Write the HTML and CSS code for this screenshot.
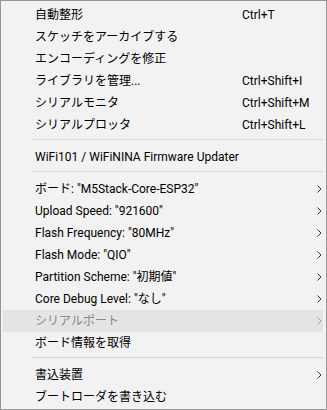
FILE: index.html
```html
<!DOCTYPE html>
<html lang="ja">
<head>
  <meta charset="UTF-8">
  <title>ツール</title>
  <link rel="stylesheet" href="styles.css">
</head>
<body>
  <div class="menu">
    <div class="item"><span class="label">自動整形</span><span class="key">Ctrl+T</span></div>
    <div class="item"><span class="label">スケッチをアーカイブする</span></div>
    <div class="item"><span class="label">エンコーディングを修正</span></div>
    <div class="item"><span class="label">ライブラリを管理...</span><span class="key">Ctrl+Shift+I</span></div>
    <div class="item"><span class="label">シリアルモニタ</span><span class="key">Ctrl+Shift+M</span></div>
    <div class="item"><span class="label">シリアルプロッタ</span><span class="key">Ctrl+Shift+L</span></div>
    <div class="sep"></div>
    <div class="item"><span class="label">WiFi101 / WiFiNINA Firmware Updater</span></div>
    <div class="sep"></div>
    <div class="item sub"><span class="label">ボード: "M5Stack-Core-ESP32"</span><span class="key"></span><svg class="arrow" width="5" height="8" viewBox="0 0 5 8"><path d="M0.5 0.5 L4 4 L0.5 7.5" fill="none" stroke="currentColor" stroke-width="1"/></svg></div>
    <div class="item sub"><span class="label">Upload Speed: "921600"</span><span class="key"></span><svg class="arrow" width="5" height="8" viewBox="0 0 5 8"><path d="M0.5 0.5 L4 4 L0.5 7.5" fill="none" stroke="currentColor" stroke-width="1"/></svg></div>
    <div class="item sub"><span class="label">Flash Frequency: "80MHz"</span><span class="key"></span><svg class="arrow" width="5" height="8" viewBox="0 0 5 8"><path d="M0.5 0.5 L4 4 L0.5 7.5" fill="none" stroke="currentColor" stroke-width="1"/></svg></div>
    <div class="item sub"><span class="label">Flash Mode: "QIO"</span><span class="key"></span><svg class="arrow" width="5" height="8" viewBox="0 0 5 8"><path d="M0.5 0.5 L4 4 L0.5 7.5" fill="none" stroke="currentColor" stroke-width="1"/></svg></div>
    <div class="item sub"><span class="label">Partition Scheme: "初期値"</span><span class="key"></span><svg class="arrow" width="5" height="8" viewBox="0 0 5 8"><path d="M0.5 0.5 L4 4 L0.5 7.5" fill="none" stroke="currentColor" stroke-width="1"/></svg></div>
    <div class="item sub"><span class="label">Core Debug Level: "なし"</span><span class="key"></span><svg class="arrow" width="5" height="8" viewBox="0 0 5 8"><path d="M0.5 0.5 L4 4 L0.5 7.5" fill="none" stroke="currentColor" stroke-width="1"/></svg></div>
    <div class="item sub disabled hover"><span class="label">シリアルポート</span><span class="key"></span><svg class="arrow" width="5" height="8" viewBox="0 0 5 8"><path d="M0.5 0.5 L4 4 L0.5 7.5" fill="none" stroke="currentColor" stroke-width="1"/></svg></div>
    <div class="item"><span class="label">ボード情報を取得</span></div>
    <div class="sep"></div>
    <div class="item sub"><span class="label">書込装置</span><span class="key"></span><svg class="arrow" width="5" height="8" viewBox="0 0 5 8"><path d="M0.5 0.5 L4 4 L0.5 7.5" fill="none" stroke="currentColor" stroke-width="1"/></svg></div>
    <div class="item"><span class="label">ブートローダを書き込む</span></div>
  </div>
</body>
</html>
```

FILE: styles.css
```css
/* Base */
body {
  margin: 0;
  font-family: Roboto, "Noto Sans CJK JP", sans-serif;
  font-size: 12px;
  color: #000;
  background: #f2f2f2;
}

/* Menu box */
.menu {
  width: 327px;
  height: 410px;
  box-sizing: border-box;
  border: 1px solid #979797;
  background: #f2f2f2;
  padding: 3px 3px 1px 2px;
}

/* Rows */
.item {
  display: grid;
  grid-template-columns: 207px 1fr 20px;
  align-items: center;
  height: 22px;
  padding-left: 32px;
  white-space: nowrap;
}

.label {
  line-height: 22px;
}

.key {
  line-height: 22px;
}

.arrow {
  justify-self: end;
  margin-right: 1px;
  color: #333;
}

.item.hover {
  background: #e4e4e4;
}

.item.disabled {
  color: #8a8a8a;
}

.item.disabled .arrow {
  color: #a0a0a0;
}

/* Separators */
.sep {
  height: 10px;
  margin-left: 29px;
  box-sizing: border-box;
  padding-top: 3px;
}

.sep::before {
  content: "";
  display: block;
  height: 1px;
  background: #d7d7d7;
}
```
